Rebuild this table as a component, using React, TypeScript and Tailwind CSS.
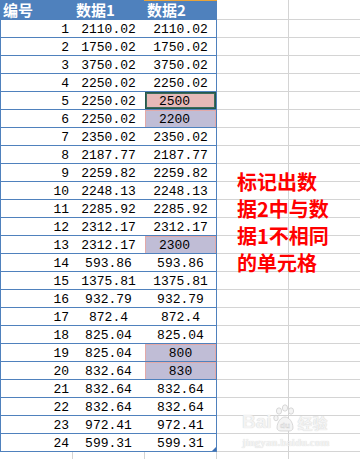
import React from "react";

type Row = { n: number; b: string; c: string; kind?: "active" | "purple" };

const rows: Row[] = [
  { n: 1, b: "2110.02", c: "2110.02" },
  { n: 2, b: "1750.02", c: "1750.02" },
  { n: 3, b: "3750.02", c: "3750.02" },
  { n: 4, b: "2250.02", c: "2250.02" },
  { n: 5, b: "2250.02", c: "2500", kind: "active" },
  { n: 6, b: "2250.02", c: "2200", kind: "purple" },
  { n: 7, b: "2350.02", c: "2350.02" },
  { n: 8, b: "2187.77", c: "2187.77" },
  { n: 9, b: "2259.82", c: "2259.82" },
  { n: 10, b: "2248.13", c: "2248.13" },
  { n: 11, b: "2285.92", c: "2285.92" },
  { n: 12, b: "2312.17", c: "2312.17" },
  { n: 13, b: "2312.17", c: "2300", kind: "purple" },
  { n: 14, b: "593.86", c: "593.86" },
  { n: 15, b: "1375.81", c: "1375.81" },
  { n: 16, b: "932.79", c: "932.79" },
  { n: 17, b: "872.4", c: "872.4" },
  { n: 18, b: "825.04", c: "825.04" },
  { n: 19, b: "825.04", c: "800", kind: "purple" },
  { n: 20, b: "832.64", c: "830", kind: "purple" },
  { n: 21, b: "832.64", c: "832.64" },
  { n: 22, b: "832.64", c: "832.64" },
  { n: 23, b: "972.41", c: "972.41" },
  { n: 24, b: "599.31", c: "599.31" },
];

const mono = { fontFamily: '"Liberation Mono", "DejaVu Sans Mono", monospace' };
const cjk = { fontFamily: '"Noto Sans CJK SC", "Noto Sans", sans-serif' };

function cClass(r: Row) {
  const base =
    "w-[72px] h-full border-r border-[#4f81bd] flex justify-center pt-[3px] leading-[14px]";
  if (r.kind === "active")
    return base + " bg-[#e6b9b8] shadow-[inset_0_0_0_1px_#25574a,inset_0_0_0_2px_#3b6a5c] pr-[12px]";
  if (r.kind === "purple") {
    const pad = r.c.length === 4 ? " pr-[12px]" : "";
    return base + " bg-[#c0bdd6] shadow-[inset_1px_1px_0_0_#e3a9a8,inset_-1px_0_0_0_#e3a9a8]" + pad;
  }
  return base;
}

export default function App() {
  return (
    <div className="relative w-[360px] h-[459px] overflow-hidden bg-white text-black" style={mono}>
      {/* header */}
      <div className="flex h-[20px]">
        <div
          className="w-[72px] h-full bg-[#4f81bd] text-white font-bold text-[15px] leading-[20px] pl-[3px]"
          style={cjk}
        >
          编号
        </div>
        <div
          className="w-[73px] h-full bg-[#4f81bd] text-white font-bold text-[15px] leading-[20px] pl-[4px]"
          style={cjk}
        >
          数据1
        </div>
        <div
          className="relative w-[72px] h-full bg-[#4f81bd] text-white font-bold text-[15px] leading-[20px] pl-[2px]"
          style={cjk}
        >
          <div className="absolute left-[-1px] right-0 top-0 h-[1px] bg-[#e8a33a]" />
          数据2
        </div>
        <div className="w-[72px] h-full border-r border-b border-[#d4d4d4]" />
        <div className="flex-1 h-full border-b border-[#d4d4d4]" />
      </div>

      {/* data rows */}
      {rows.map((r) => (
        <div key={r.n} className="flex h-[18px] text-[13px]">
          <div className="flex w-[217px] h-full border-l border-b border-[#4f81bd]">
            <div className="w-[71px] h-full flex justify-end pr-[3px] pt-[3px] leading-[14px]">{r.n}</div>
            <div className="w-[73px] h-full flex justify-center pt-[3px] leading-[14px]">{r.b}</div>
            <div className={cClass(r)}>{r.c}</div>
          </div>
          <div className="w-[72px] h-full border-r border-b border-[#d4d4d4]" />
          <div className="flex-1 h-full border-b border-[#d4d4d4]" />
        </div>
      ))}

      {/* filler row */}
      <div className="flex h-[10px]">
        <div className="w-[73px] h-full border-r border-[#d4d4d4]" />
        <div className="w-[72px] h-full border-r border-[#d4d4d4]" />
        <div className="w-[72px] h-full border-r border-[#d4d4d4]" />
        <div className="w-[72px] h-full border-r border-[#d4d4d4]" />
        <div className="flex-1 h-full" />
      </div>

      {/* table resize handle */}
      <div className="absolute left-[212px] top-[447px] w-0 h-0 border-l-[4px] border-l-transparent border-b-[4px] border-b-[#3d6fb3]" />

      {/* annotation */}
      <div
        className="absolute left-[237px] top-[168px] text-[#ff0000] font-bold text-[20px] leading-[27px]"
        style={{ fontFamily: '"Noto Sans CJK SC", "Noto Sans", sans-serif' }}
      >
        <div>标记出数</div>
        <div>据2中与数</div>
        <div>据1不相同</div>
        <div>的单元格</div>
      </div>

      {/* watermark */}
      <div className="absolute left-[242px] top-[402px] w-[100px] h-[50px] text-[#f3f3f3]">
        <div className="flex items-end h-[30px]">
          <span
            className="font-bold text-[19px] leading-[20px]"
            style={{ fontFamily: '"Liberation Sans", Arial, sans-serif', textShadow: "0 0 1px #c8c8c8" }}
          >
            Bai
          </span>
          <svg width="24" height="28" viewBox="0 0 24 28" className="mx-[1px]">
            <g fill="#f4f4f4" stroke="#cfcfcf" strokeWidth="0.8">
              <ellipse cx="6" cy="7" rx="2.6" ry="3.2" />
              <ellipse cx="12" cy="4" rx="2.6" ry="3.2" />
              <ellipse cx="18" cy="7" rx="2.6" ry="3.2" />
              <ellipse cx="3" cy="14" rx="2.2" ry="2.8" />
              <path d="M4 24c0-6 4-11 8-11s8 5 8 11c0 2-2 3-4 3H8c-2 0-4-1-4-3z" />
            </g>
            <text x="12" y="24" textAnchor="middle" fontSize="8" fontWeight="bold" fill="#f4f4f4" stroke="#cfcfcf" strokeWidth="0.4" fontFamily="Liberation Sans, Arial, sans-serif">
              du
            </text>
          </svg>
          <span
            className="font-bold text-[15px] leading-[18px]"
            style={{ fontFamily: '"Noto Sans CJK SC", sans-serif', textShadow: "0 0 1px #c8c8c8" }}
          >
            经验
          </span>
        </div>
        <div
          className="text-[11px] leading-[14px] mt-[3px] font-bold"
          style={{ fontFamily: '"Liberation Serif", serif', textShadow: "0 0 1px #d0d0d0" }}
        >
          jingyan.baidu.com
        </div>
      </div>
    </div>
  );
}
